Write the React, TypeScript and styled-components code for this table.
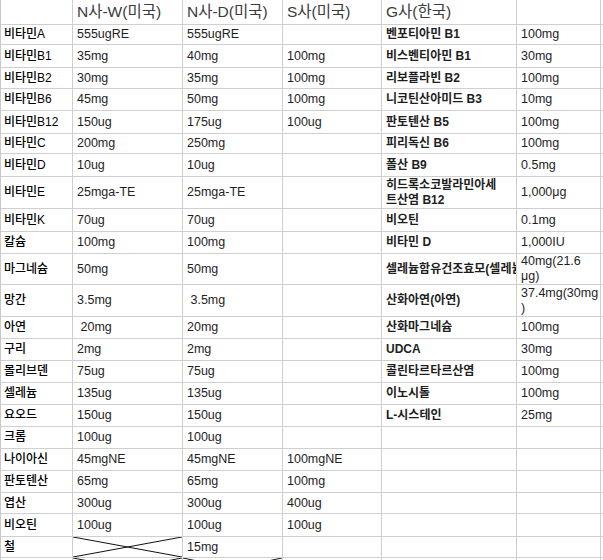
import React from 'react'
import styled, { createGlobalStyle } from 'styled-components'

const GlobalStyle = createGlobalStyle`
  html, body {
    margin: 0;
    padding: 0;
    background: #ffffff;
  }
  body {
    font-family: "Liberation Sans", "Noto Sans CJK KR", sans-serif;
  }
`

// column widths incl. right grid line
const COLS = [72, 110, 100, 99, 135, 84, 4]

type CellData = string | { t: string; br?: string } | 'X' | null

type RowData = { h: number; cells: CellData[] }

const HEAD = ['', 'N사-W(미국)', 'N사-D(미국)', 'S사(미국)', 'G사(한국)', '', '']

const ROWS: RowData[] = [
  { h: 20, cells: ['비타민A', '555ugRE', '555ugRE', null, '벤포티아민 B1', '100mg'] },
  { h: 23, cells: ['비타민B1', '35mg', '40mg', '100mg', '비스벤티아민 B1', '30mg'] },
  { h: 21, cells: ['비타민B2', '30mg', '35mg', '100mg', '리보플라빈 B2', '100mg'] },
  { h: 22, cells: ['비타민B6', '45mg', '50mg', '100mg', '니코틴산아미드 B3', '10mg'] },
  { h: 23, cells: ['비타민B12', '150ug', '175ug', '100ug', '판토텐산 B5', '100mg'] },
  { h: 20, cells: ['비타민C', '200mg', '250mg', null, '피리독신 B6', '100mg'] },
  { h: 23, cells: ['비타민D', '10ug', '10ug', null, '폴산 B9', '0.5mg'] },
  { h: 32, cells: ['비타민E', '25mga-TE', '25mga-TE', null, { t: '히드록소코발라민아세', br: '트산염 B12' }, '1,000μg'] },
  { h: 23, cells: ['비타민K', '70ug', '70ug', null, '비오틴', '0.1mg'] },
  { h: 22, cells: ['칼슘', '100mg', '100mg', null, '비타민 D', '1,000IU'] },
  { h: 31, cells: ['마그네슘', '50mg', '50mg', null, '셀레늄함유건조효모(셀레늄)', { t: '40mg(21.6', br: 'μg)' }] },
  { h: 32, cells: ['망간', '3.5mg', '\u00a03.5mg', null, '산화아연(아연)', { t: '37.4mg(30mg', br: ')' }] },
  { h: 22, cells: ['아연', '\u00a020mg', '20mg', null, '산화마그네슘', '100mg'] },
  { h: 22, cells: ['구리', '2mg', '2mg', null, 'UDCA', '30mg'] },
  { h: 22, cells: ['몰리브덴', '75ug', '75ug', null, '콜린타르타르산염', '100mg'] },
  { h: 22, cells: ['셀레늄', '135ug', '135ug', null, '이노시톨', '100mg'] },
  { h: 22, cells: ['요오드', '150ug', '150ug', null, 'L-시스테인', '25mg'] },
  { h: 22, cells: ['크롬', '100ug', '100ug', null, null, null] },
  { h: 22, cells: ['나이아신', '45mgNE', '45mgNE', '100mgNE', null, null] },
  { h: 22, cells: ['판토텐산', '65mg', '65mg', '100mg', null, null] },
  { h: 21, cells: ['엽산', '300ug', '300ug', '400ug', null, null] },
  { h: 23, cells: ['비오틴', '100ug', '100ug', '100ug', null, null] },
  { h: 21, cells: ['철', 'X', '15mg', null, null, null] },
  { h: 22, cells: [null, 'X', 'X', null, null, null] },
]

const Sheet = styled.div`
  width: 604px;
  border-left: 1px solid #c9c9c9;
  overflow: hidden;
  color: #1e1e1e;
`

const Row = styled.div<{ $h: number }>`
  display: flex;
  height: ${(p) => p.$h}px;
`

const Cell = styled.div<{ $w: number; $col: number; $head?: boolean }>`
  position: relative;
  box-sizing: border-box;
  flex: 0 0 ${(p) => p.$w}px;
  width: ${(p) => p.$w}px;
  height: 100%;
  border-right: 1px solid #cfcfcf;
  border-bottom: 1px solid #cfcfcf;
  padding: 0 2px 0 ${(p) => (p.$col === 0 ? 3 : 4)}px;
  display: flex;
  align-items: center;
  overflow: hidden;
  white-space: nowrap;
  font-size: ${(p) => (p.$head ? '15.5px' : p.$col === 0 || p.$col === 4 ? '12px' : '12.5px')};
  font-weight: ${(p) => (p.$head ? 400 : p.$col === 4 ? 700 : p.$col === 0 ? 500 : 400)};
  color: ${(p) => (p.$head ? '#3c3c3c' : p.$col === 0 ? '#000' : '#1e1e1e')};
  line-height: ${(p) => (p.$head ? '18px' : '15px')};
`

const Wrapped = styled.span`
  display: block;
  line-height: 15px;
`

const Cross = styled.svg`
  position: absolute;
  inset: 0;
  width: 100%;
  height: 100%;
`

const CrossMark = () => (
  <Cross viewBox="0 0 100 100" preserveAspectRatio="none">
    <line x1="0" y1="0" x2="100" y2="100" stroke="#111" strokeWidth="1" vectorEffect="non-scaling-stroke" />
    <line x1="0" y1="100" x2="100" y2="0" stroke="#111" strokeWidth="1" vectorEffect="non-scaling-stroke" />
  </Cross>
)

const renderContent = (c: CellData) => {
  if (c === null) return null
  if (c === 'X') return <CrossMark />
  if (typeof c === 'string') return c
  return (
    <Wrapped>
      {c.t}
      <br />
      {c.br}
    </Wrapped>
  )
}

const App = () => {
  return (
    <>
      <GlobalStyle />
      <Sheet>
        <Row $h={25}>
          {COLS.map((w, i) => (
            <Cell key={i} $w={w} $col={i} $head>
              {HEAD[i]}
            </Cell>
          ))}
        </Row>
        {ROWS.map((r, ri) => (
          <Row key={ri} $h={r.h}>
            {COLS.map((w, i) => (
              <Cell key={i} $w={w} $col={i}>
                {renderContent(r.cells[i] ?? null)}
              </Cell>
            ))}
          </Row>
        ))}
      </Sheet>
    </>
  )
}

export default App
